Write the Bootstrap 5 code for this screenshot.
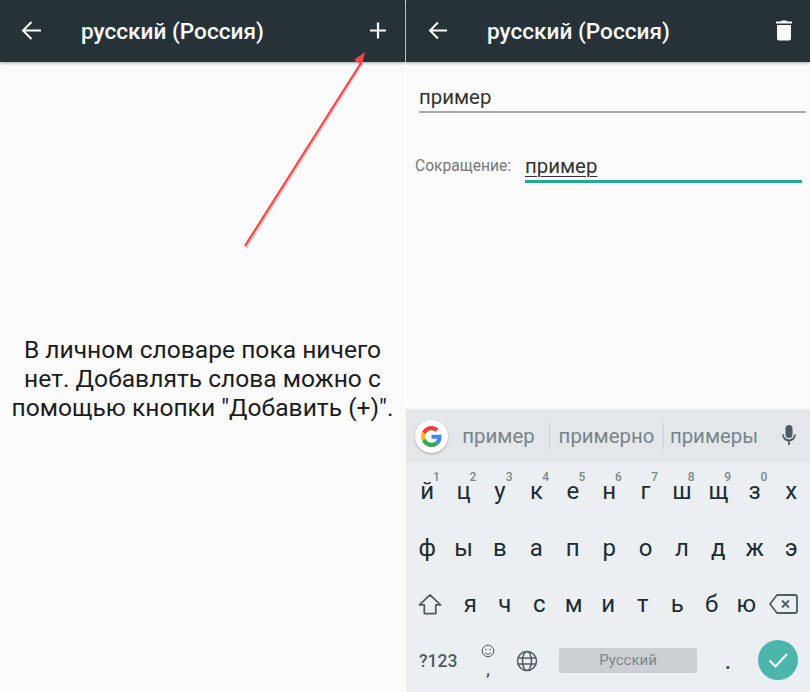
<!DOCTYPE html>
<html lang="ru">
<head>
<meta charset="utf-8">
<title>Личный словарь</title>
<link href="https://cdn.jsdelivr.net/npm/bootstrap@5.3.0/dist/css/bootstrap.min.css" rel="stylesheet">
<style>
html,body{margin:0;height:692px;overflow:hidden}
body{font-family:Roboto,"Noto Sans",sans-serif;background:#fff;color:#212121}
.screen-wrap{width:810px;height:692px;position:relative}
.pane{height:692px;background:#fafafa;min-width:0}
.pane-left{width:405px;flex:none}
.pane-right{width:404px;flex:none;margin-left:1px}
.appbar{height:62px;background:#263238;color:#fafafa;box-shadow:0 1px 3px rgba(0,0,0,.35);flex:none;position:relative}
.appbar-title{font-size:22.6px;font-weight:500;line-height:64px;white-space:nowrap}
.pane-left .appbar-title{margin-left:81px}
.pane-right .appbar-title{margin-left:81px}
.bar-ico{position:absolute;top:0;display:block}
.empty-msg{font-size:24.6px;line-height:29px;text-align:center;padding-top:273px;margin:0;color:#1c1c1c;white-space:nowrap}
.word-field{margin:22px 4px 0 13px;border-bottom:2px solid #a9a9a9;font-size:20.400px;line-height:26px;height:29px;color:#333}
.short-row{margin:39px 8px 0 9px;height:36px}
.short-label{font-size:15.600px;color:#777;line-height:22px;width:110px;flex:none;padding-top:3px}
.short-val{flex:1;border-bottom:3px solid #26a69a;font-size:20.400px;line-height:28px;height:31px;color:#333}
.short-val span{text-decoration:underline;text-underline-offset:3px;text-decoration-thickness:1px}
.kbd-area{height:282px;flex:none;background:#eceff1}
.sugg{height:52px;background:#e4e7e9;box-shadow:0 -1px 2px rgba(0,0,0,.08)}
.g-btn{width:33px;height:33px;border-radius:50%;background:#fff;box-shadow:0 1px 2px rgba(0,0,0,.3);margin-left:9px;flex:none}
.sugg-word{font-size:20.400px;color:#78848a;line-height:26px;white-space:nowrap;text-align:center}
.sw1{width:101px}
.sw2{width:114px;border-left:1px solid #cfd3d6}
.sw3{width:101px;border-left:1px solid #cfd3d6;margin-right:17px}
.key-row{height:56.5px}
.key-a{width:36.4px;flex:none;text-align:center;font-size:24px;color:#1d2b33;position:relative;line-height:1}
.key-b{width:34.5px;flex:none;text-align:center;font-size:24px;color:#1d2b33;line-height:1}
.key-a sup{position:absolute;top:-8px;left:24px;font-size:12px;font-weight:500;color:#7c868c;line-height:1;vertical-align:baseline}
.rows{padding:1px 0 0 3px}
.k-num{font-size:17.500px;color:#4f5b62;font-weight:500;margin-left:10px;width:53px;flex:none}
.k-emoji{width:24px;flex:none;text-align:center;color:#4f5b62;font-size:20px;line-height:1;margin-left:4px}
.space-bar{width:138px;height:25px;background:#cbcfd2;border-radius:3px;font-size:15px;color:#7d878d;line-height:25px;text-align:center;margin-left:21px;flex:none}
.k-dot{width:62px;flex:none;text-align:center;font-size:20px;color:#37474f;font-weight:700;line-height:1;padding-top:3px}
.done-btn{width:40px;height:40px;border-radius:50%;background:#4db6ac;flex:none;margin-left:-1px;margin-top:-2px}
.arrow-layer{position:absolute;left:0;top:0;pointer-events:none}
</style>
</head>
<body>
<div class="screen-wrap d-flex">
  <section class="pane pane-left d-flex flex-column">
    <div class="appbar">
      <svg class="bar-ico" style="left:20px" width="26" height="62" viewBox="0 0 26 62"><path d="M3 30.500H21M11.500 22L3 30.500 11.500 39" fill="none" stroke="#fafafa" stroke-width="2"/></svg>
      <div class="appbar-title">русский (Россия)</div>
      <svg class="bar-ico" style="left:367px" width="22" height="62" viewBox="0 0 22 62"><path d="M11 22.500V38.500M3 30.500H19" fill="none" stroke="#fafafa" stroke-width="2.200"/></svg>
    </div>
    <p class="empty-msg">В личном словаре пока ничего<br>нет. Добавлять слова можно с<br>помощью кнопки "Добавить (+)".</p>
  </section>
  <section class="pane pane-right d-flex flex-column">
    <div class="appbar">
      <svg class="bar-ico" style="left:20px" width="26" height="62" viewBox="0 0 26 62"><path d="M4 30.500H21M12 22.500L4 30.500 12 38.500" fill="none" stroke="#fafafa" stroke-width="2"/></svg>
      <div class="appbar-title">русский (Россия)</div>
      <svg class="bar-ico" style="left:367px" width="22" height="62" viewBox="0 0 22 62"><path d="M4 25H18V38.500a2 2 0 0 1-2 2H6a2 2 0 0 1-2-2ZM3 21.500H7.500L8.500 20.500H13.500L14.500 21.500H19V23.500H3Z" fill="#fafafa"/></svg>
    </div>
    <div class="word-field">пример</div>
    <div class="short-row d-flex">
      <div class="short-label">Сокращение:</div>
      <div class="short-val"><span>пример</span></div>
    </div>
    <div class="flex-grow-1"></div>
    <div class="kbd-area">
      <div class="sugg d-flex align-items-center">
        <div class="g-btn d-flex align-items-center justify-content-center">
          <svg width="21" height="21" viewBox="0 0 48 48"><path fill="#EA4335" d="M24 9.500c3.500 0 6.700 1.300 9.200 3.400l6.800-6.800C35.900 2.400 30.300 0 24 0 14.600 0 6.500 5.400 2.600 13.200l8 6.200C12.400 13.700 17.700 9.500 24 9.500z"/><path fill="#4285F4" d="M47 24.500c0-1.600-.2-3.200-.5-4.500H24v9h12.900c-.6 3-2.200 5.500-4.700 7.200l7.700 6c4.500-4.200 7.100-10.300 7.100-17.700z"/><path fill="#FBBC05" d="M10.500 28.600c-.5-1.400-.8-3-.8-4.600s.3-3.200.8-4.600l-8-6.200C.9 16.400 0 20.100 0 24s.9 7.600 2.600 10.800z"/><path fill="#34A853" d="M24 48c6.500 0 11.900-2.100 15.900-5.800l-7.700-6c-2.200 1.400-4.900 2.300-8.200 2.300-6.300 0-11.600-4.200-13.500-9.900l-8 6.200C6.500 42.600 14.600 48 24 48z"/></svg>
        </div>
        <div class="sugg-word sw1">пример</div>
        <div class="sugg-word sw2">примерно</div>
        <div class="sugg-word sw3">примеры</div>
        <svg width="16" height="24" viewBox="0 0 16 24"><rect x="4.500" y="1" width="7" height="13" rx="3.500" fill="#4f5b62"/><path d="M2 10.500a6 6 0 0 0 12 0M8 16.500V21" fill="none" stroke="#4f5b62" stroke-width="1.800"/></svg>
      </div>
      <div class="rows">
        <div class="key-row d-flex align-items-center">
          <div class="key-a">й<sup>1</sup></div><div class="key-a">ц<sup>2</sup></div><div class="key-a">у<sup>3</sup></div><div class="key-a">к<sup>4</sup></div><div class="key-a">е<sup>5</sup></div><div class="key-a">н<sup>6</sup></div><div class="key-a">г<sup>7</sup></div><div class="key-a">ш<sup>8</sup></div><div class="key-a">щ<sup>9</sup></div><div class="key-a">з<sup>0</sup></div><div class="key-a">х</div>
        </div>
        <div class="key-row d-flex align-items-center">
          <div class="key-a">ф</div><div class="key-a">ы</div><div class="key-a">в</div><div class="key-a">а</div><div class="key-a">п</div><div class="key-a">р</div><div class="key-a">о</div><div class="key-a">л</div><div class="key-a">д</div><div class="key-a">ж</div><div class="key-a">э</div>
        </div>
        <div class="key-row d-flex align-items-center">
          <svg width="44" height="24" viewBox="0 0 46 24"><path d="M22 2.500L33 13H28V22H16V13H11Z" fill="none" stroke="#4f5b62" stroke-width="1.800" stroke-linejoin="round"/></svg>
          <div class="key-b">я</div><div class="key-b">ч</div><div class="key-b">с</div><div class="key-b">м</div><div class="key-b">и</div><div class="key-b">т</div><div class="key-b">ь</div><div class="key-b">б</div><div class="key-b">ю</div>
          <svg width="32" height="22" viewBox="0 0 32 22" class="ms-1"><path d="M9 2H27a2 2 0 0 1 2 2V18a2 2 0 0 1-2 2H9L2 11Z" fill="none" stroke="#4f5b62" stroke-width="1.800" stroke-linejoin="round"/><path d="M14 7.500L21 14.500M21 7.500L14 14.500" stroke="#4f5b62" stroke-width="1.800"/></svg>
        </div>
        <div class="key-row d-flex align-items-center">
          <div class="k-num">?123</div>
          <div class="k-emoji d-flex flex-column align-items-center">
            <svg width="14" height="14" viewBox="0 0 14 14"><circle cx="7" cy="7" r="5.800" fill="none" stroke="#4f5b62" stroke-width="1"/><circle cx="5" cy="5.500" r=".8" fill="#4f5b62"/><circle cx="9" cy="5.500" r=".8" fill="#4f5b62"/><path d="M4 8.500a3.300 3.300 0 0 0 6 0" fill="none" stroke="#4f5b62"/></svg>
            <span>,</span>
          </div>
          <svg width="22" height="22" viewBox="0 0 22 22" class="ms-3"><g fill="none" stroke="#4f5b62" stroke-width="1.500"><circle cx="11" cy="11" r="9.500"/><ellipse cx="11" cy="11" rx="4.500" ry="9.500"/><path d="M2 8H20M2 14H20"/></g></svg>
          <div class="space-bar">Русский</div>
          <div class="k-dot">.</div>
          <div class="done-btn d-flex align-items-center justify-content-center">
            <svg width="22" height="18" viewBox="0 0 22 18"><path d="M2.500 9.500L8.500 15.500 20 3" fill="none" stroke="#fff" stroke-width="2"/></svg>
          </div>
        </div>
      </div>
    </div>
  </section>
  <svg class="arrow-layer" width="810" height="692" viewBox="0 0 810 692"><path d="M245 247L361 63" stroke="#000" stroke-opacity=".18" stroke-width="2.500" transform="translate(1 1)"/><path d="M245 246L361 63" stroke="#f4474a" stroke-width="2.200"/><path d="M365 52L354 60 362 65Z" fill="#f4474a"/></svg>
</div>
<script src="https://cdn.jsdelivr.net/npm/bootstrap@5.3.0/dist/js/bootstrap.bundle.min.js"></script>
</body>
</html>
